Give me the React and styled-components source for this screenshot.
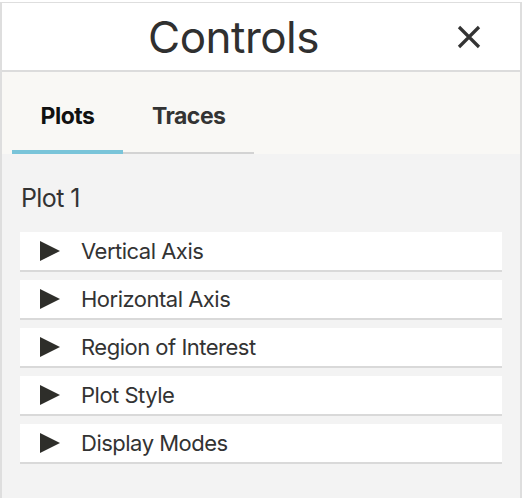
import React from "react";
import styled, { createGlobalStyle } from "styled-components";

const Global = createGlobalStyle`
  html, body { margin: 0; padding: 0; background: #ffffff; }
  body { font-family: Inter, "Noto Sans", sans-serif; }
  * { box-sizing: border-box; }
`;

const Panel = styled.div`
  margin-top: 2px;
  width: 522px;
  height: 496px;
  border-top: 1px solid #dedede;
  border-left: 2px solid #dedede;
  border-right: 2px solid #dedede;
  background: #f3f3f3;
  display: flex;
  flex-direction: column;
`;

const Header = styled.div`
  height: 69px;
  background: #ffffff;
  border-bottom: 2px solid #dcdcdc;
  display: flex;
  align-items: center;
`;

const Title = styled.h1`
  flex: 1;
  margin: 0;
  padding-left: 44px;
  text-align: center;
  font-size: 44px;
  font-weight: 400;
  color: #303030;
  letter-spacing: -0.5px;
`;

const Close = styled.button`
  width: 24px;
  height: 24px;
  margin-right: 39px;
  margin-left: 36px;
  padding: 0;
  border: none;
  background: none;
  display: flex;
  align-items: center;
  justify-content: center;
  cursor: pointer;
`;

const TabBar = styled.div`
  height: 82px;
  background: #f9f8f5;
  padding-left: 10px;
  display: flex;
  align-items: flex-end;
`;

const Tab = styled.div`
  padding: ${(p) => (p.$active ? 10 : 8)}px ${(p) => p.$pad}px 0;
  height: 82px;
  display: flex;
  align-items: center;
  font-size: 23px;
  font-weight: 700;
  letter-spacing: -0.5px;
  color: ${(p) => (p.$active ? "#111111" : "#333333")};
  border-bottom: ${(p) => (p.$active ? "4px solid #79c4d9" : "2px solid #d3d3d3")};
`;

const Content = styled.div`
  padding: 29px 18px 0 18px;
  display: flex;
  flex-direction: column;
`;

const PlotTitle = styled.div`
  font-size: 25px;
  line-height: 30px;
  color: #333333;
  letter-spacing: -0.6px;
  height: 49px;
  padding-left: 1px;
`;

const List = styled.div`
  display: flex;
  flex-direction: column;
  gap: 8px;
`;

const Row = styled.div`
  height: 40px;
  background: #ffffff;
  border-bottom: 2px solid #d9d9d9;
  display: flex;
  align-items: center;
  padding-left: 20px;
`;

const Arrow = styled.svg`
  width: 20px;
  height: 20px;
  flex-shrink: 0;
  margin-right: 21px;
  margin-top: -1px;
`;

const Label = styled.span`
  font-size: 22px;
  color: #333333;
  letter-spacing: -0.5px;
`;

const sections = [
  "Vertical Axis",
  "Horizontal Axis",
  "Region of Interest",
  "Plot Style",
  "Display Modes",
];

export default function App() {
  return (
    <>
      <Global />
      <Panel>
        <Header>
          <Title>Controls</Title>
          <Close aria-label="Close">
            <svg width="24" height="24" viewBox="0 0 24 24">
              <path d="M2 2 L22 22 M22 2 L2 22" stroke="#333" strokeWidth="3.2" strokeLinecap="butt" />
            </svg>
          </Close>
        </Header>
        <TabBar>
          <Tab $active $pad={28.5}>Plots</Tab>
          <Tab $pad={29}>Traces</Tab>
        </TabBar>
        <Content>
          <PlotTitle>Plot 1</PlotTitle>
          <List>
            {sections.map((s) => (
              <Row key={s}>
                <Arrow viewBox="0 0 20 20">
                  <path d="M0 0 L20 10 L0 20 Z" fill="#2e2e2a" />
                </Arrow>
                <Label>{s}</Label>
              </Row>
            ))}
          </List>
        </Content>
      </Panel>
    </>
  );
}
